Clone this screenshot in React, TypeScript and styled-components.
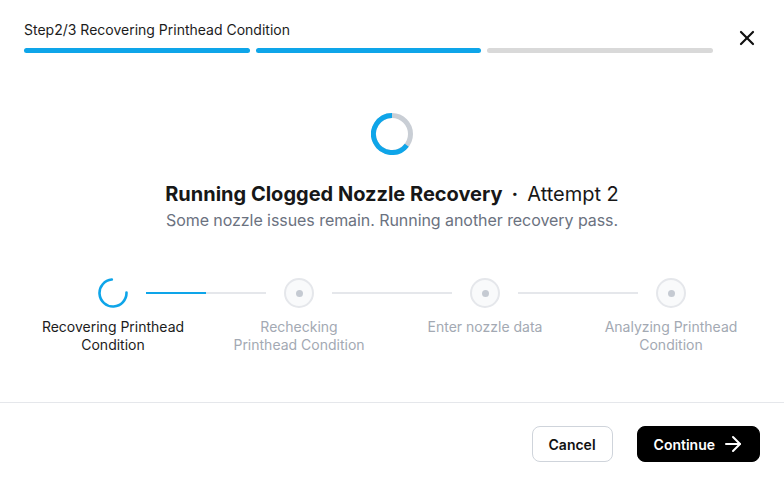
import React from "react";
import styled, { createGlobalStyle } from "styled-components";
import { X, ArrowRight } from "lucide-react";

const Global = createGlobalStyle`
  html, body { margin: 0; padding: 0; background: #ffffff; }
  body { font-family: Inter, "Noto Sans", "Liberation Sans", sans-serif; -webkit-font-smoothing: antialiased; }
  * { box-sizing: border-box; }
`;

const Modal = styled.div`
  width: 784px;
  height: 486px;
  display: flex;
  flex-direction: column;
  background: #fff;
`;

const Header = styled.header`
  display: flex;
  align-items: flex-start;
  gap: 22px;
  padding: 20px 25px 0 24px;
`;

const HeaderMain = styled.div`
  flex: 1;
  display: flex;
  flex-direction: column;
  gap: 8px;
`;

const StepTitle = styled.div`
  font-size: 14px;
  line-height: 20px;
  color: #1c1c1c;
`;

const Bars = styled.div`
  display: grid;
  grid-template-columns: repeat(3, 1fr);
  gap: 6px;
`;

const Bar = styled.div<{ $done: boolean }>`
  height: 5px;
  border-radius: 3px;
  background: ${(p) => (p.$done ? "#0ea5e9" : "#d9d9d9")};
`;

const CloseButton = styled.button`
  margin-top: 6px;
  padding: 0;
  border: none;
  background: none;
  width: 24px;
  height: 24px;
  display: flex;
  align-items: center;
  justify-content: center;
  color: #111;
  cursor: pointer;
`;

const Body = styled.main`
  flex: 1;
  display: flex;
  flex-direction: column;
  align-items: center;
  padding-top: 60px;
`;

const BigSpinner = styled.svg`
  display: block;
`;

const Title = styled.h2`
  margin: 25px 0 0;
  font-size: 20px;
  line-height: 28px;
  font-weight: 700;
  color: #171717;
`;

const Attempt = styled.span`
  font-weight: 400;
  color: #171717;
`;

const Dot = styled.span`
  font-weight: 700;
  margin: 0 9px;
`;

const Subtitle = styled.p`
  margin: 0;
  font-size: 16px;
  line-height: 24px;
  letter-spacing: -0.06px;
  color: #6b7280;
`;

const Stepper = styled.div`
  margin-top: 46px;
  width: 744px;
  display: flex;
  flex-direction: column;
`;

const Track = styled.div`
  display: flex;
  align-items: center;
  padding-left: 78px;
`;

const Connector = styled.div`
  width: 120px;
  height: 2px;
  margin: 0 18px;
  background: #e5e7eb;
  display: flex;
`;

const ConnectorFill = styled.div`
  height: 100%;
  background: #0ea5e9;
`;

const PendingNode = styled.div`
  width: 30px;
  height: 30px;
  border-radius: 50%;
  border: 2px solid #e5e7eb;
  background: #f9fafb;
  display: flex;
  align-items: center;
  justify-content: center;
  flex-shrink: 0;

  &::after {
    content: "";
    width: 7px;
    height: 7px;
    border-radius: 50%;
    background: #c5cad2;
  }
`;

const ActiveNode = styled.svg`
  display: block;
  flex-shrink: 0;
`;

const Labels = styled.div`
  display: grid;
  grid-template-columns: repeat(4, 186px);
  margin-top: 10px;
`;

const Label = styled.div<{ $active: boolean }>`
  text-align: center;
  font-size: 14px;
  line-height: 18px;
  color: ${(p) => (p.$active ? "#1c1c1c" : "#a3a9b3")};
`;

const Footer = styled.footer`
  border-top: 1px solid #e5e7eb;
  padding: 23px 24px 24px;
  display: flex;
  justify-content: flex-end;
  gap: 24px;
`;

const Button = styled.button<{ $primary?: boolean }>`
  height: 36px;
  border-radius: 8px;
  font-family: inherit;
  font-size: 14px;
  font-weight: 600;
  display: flex;
  align-items: center;
  gap: 6px;
  cursor: pointer;
  padding: ${(p) => (p.$primary ? "0 14px 0 16px" : "0 16px")};
  border: 1px solid ${(p) => (p.$primary ? "#000" : "#cfd4db")};
  background: ${(p) => (p.$primary ? "#000" : "#fff")};
  color: ${(p) => (p.$primary ? "#fff" : "#111")};
`;

const arcPath = (cx: number, cy: number, r: number, startDeg: number, endDeg: number) => {
  const rad = (d: number) => ((d - 90) * Math.PI) / 180;
  const x1 = cx + r * Math.cos(rad(startDeg));
  const y1 = cy + r * Math.sin(rad(startDeg));
  const x2 = cx + r * Math.cos(rad(endDeg));
  const y2 = cy + r * Math.sin(rad(endDeg));
  const large = endDeg - startDeg > 180 ? 1 : 0;
  return `M ${x1} ${y1} A ${r} ${r} 0 ${large} 1 ${x2} ${y2}`;
};

const steps = [
  ["Recovering Printhead", "Condition"],
  ["Rechecking", "Printhead Condition"],
  ["Enter nozzle data"],
  ["Analyzing Printhead", "Condition"],
];

export default function App() {
  return (
    <>
      <Global />
      <Modal>
        <Header>
          <HeaderMain>
            <StepTitle>Step2/3 Recovering Printhead Condition</StepTitle>
            <Bars>
              <Bar $done />
              <Bar $done />
              <Bar $done={false} />
            </Bars>
          </HeaderMain>
          <CloseButton aria-label="Close">
            <X size={24} strokeWidth={2.2} />
          </CloseButton>
        </Header>

        <Body>
          <BigSpinner width="42" height="42" viewBox="0 0 42 42">
            <circle cx="21" cy="21" r="18.5" fill="none" stroke="#c9ced5" strokeWidth="5" />
            <path d={arcPath(21, 21, 18.5, 127, 360)} fill="none" stroke="#0ea5e9" strokeWidth="5" />
          </BigSpinner>
          <Title>
            Running Clogged Nozzle Recovery<Dot>·</Dot>
            <Attempt>Attempt 2</Attempt>
          </Title>
          <Subtitle>Some nozzle issues remain. Running another recovery pass.</Subtitle>

          <Stepper>
            <Track>
              <ActiveNode width="30" height="30" viewBox="0 0 30 30">
                <path d={arcPath(15, 15, 13.5, 88, 355)} fill="none" stroke="#0ea5e9" strokeWidth="2.6" strokeLinecap="round" />
              </ActiveNode>
              <Connector>
                <ConnectorFill style={{ width: "50%" }} />
              </Connector>
              <PendingNode />
              <Connector />
              <PendingNode />
              <Connector />
              <PendingNode />
            </Track>
            <Labels>
              {steps.map((lines, i) => (
                <Label key={i} $active={i === 0}>
                  {lines.map((l, j) => (
                    <div key={j}>{l}</div>
                  ))}
                </Label>
              ))}
            </Labels>
          </Stepper>
        </Body>

        <Footer>
          <Button>Cancel</Button>
          <Button $primary>
            Continue
            <ArrowRight size={24} strokeWidth={2} />
          </Button>
        </Footer>
      </Modal>
    </>
  );
}
